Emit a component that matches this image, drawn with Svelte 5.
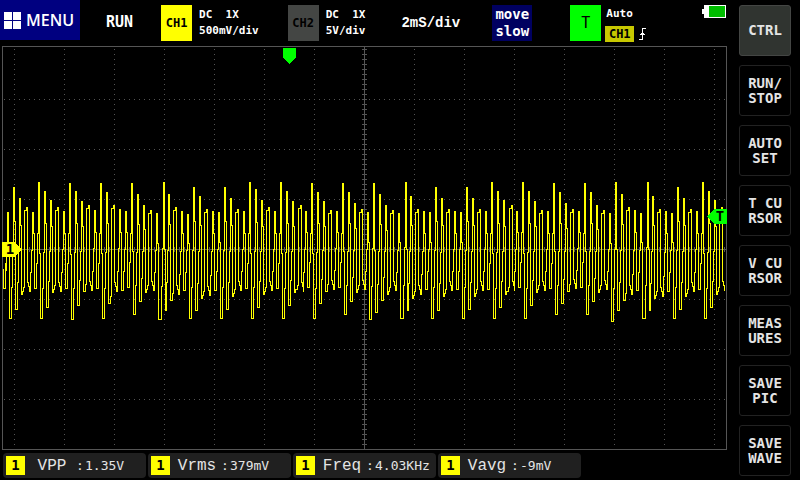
<script lang="ts">
  type Pulse = [x: number, top: number, bottom: number];

  const WIDTH = 725;
  const HEIGHT = 404;

  const softKeys = [
    ['CTRL'],
    ['RUN/', 'STOP'],
    ['AUTO', 'SET'],
    ['T CU', 'RSOR'],
    ['V CU', 'RSOR'],
    ['MEAS', 'URES'],
    ['SAVE', 'PIC'],
    ['SAVE', 'WAVE'],
  ];

  const measures = [
    { label: 'VPP', value: '1.35V' },
    { label: 'Vrms', value: '379mV' },
    { label: 'Freq', value: '4.03KHz' },
    { label: 'Vavg', value: '-9mV' },
  ];

  // Peak position, peak level and the level of the trough that follows
  const pulses: Pulse[] = [
    [5, 166, 272], [11, 141, 263], [17, 152, 248], [24, 161, 245], [30, 166, 242],
    [36, 136, 272], [42, 145, 261], [48, 154, 246], [55, 161, 245], [61, 165, 242],
    [67, 137, 273], [73, 145, 259], [79, 155, 245], [86, 159, 244], [92, 164, 242],
    [98, 137, 272], [104, 146, 257], [111, 159, 245], [117, 163, 244], [123, 165, 241],
    [129, 137, 268], [135, 148, 255], [141, 159, 246], [148, 164, 244], [154, 167, 273],
    [161, 136, 264], [166, 148, 254], [173, 161, 248], [179, 165, 244], [185, 168, 272],
    [191, 141, 264], [197, 150, 252], [204, 163, 249], [210, 165, 244], [216, 166, 272],
    [222, 141, 263], [228, 152, 250], [235, 163, 244], [241, 165, 242],
    [247, 136, 272], [253, 143, 261], [259, 154, 248], [266, 161, 244], [272, 165, 242],
    [278, 136, 272], [284, 145, 259], [290, 155, 246], [298, 159, 245], [303, 165, 241],
    [309, 137, 272], [315, 146, 257], [321, 155, 245], [328, 164, 243], [334, 165, 241],
    [340, 137, 268], [346, 146, 255], [352, 157, 246], [359, 163, 243], [365, 166, 273],
    [371, 137, 266], [377, 148, 254], [383, 159, 248], [390, 164, 244], [396, 167, 272],
    [403, 136, 264], [408, 150, 252], [415, 163, 248], [421, 165, 243], [427, 166, 272],
    [433, 141, 264], [439, 152, 250], [446, 163, 244], [452, 165, 243], [458, 166, 272],
    [464, 141, 263], [470, 152, 250], [477, 163, 244], [483, 165, 243],
    [489, 136, 272], [495, 145, 261], [501, 154, 248], [509, 159, 244], [514, 165, 241],
    [520, 136, 272], [526, 145, 259], [532, 155, 246], [539, 164, 244], [545, 165, 242],
    [551, 137, 268], [557, 146, 257], [563, 157, 245], [570, 163, 242], [576, 165, 241],
    [582, 137, 268], [588, 146, 255], [594, 159, 246], [601, 164, 243], [607, 167, 275],
    [613, 136, 264], [619, 148, 254], [626, 161, 248], [632, 164, 244], [638, 167, 272],
    [645, 136, 264], [650, 150, 252], [657, 163, 250], [663, 165, 245], [669, 167, 272],
    [675, 141, 263], [681, 152, 250], [688, 163, 245], [694, 165, 243],
    [700, 136, 272], [706, 145, 261], [712, 154, 248], [719, 161, 244],
  ];

  function between(a: number, b: number, share: number) {
    return Math.round(a + (b - a) * share);
  }

  // One screen column per sample: run to the column, then jump to the level
  function buildTrace(list: Pulse[]) {
    let path = 'M1.5 222.5V242.5H3.5V216.5';
    let before = 242;
    let last = 2;
    const step = (x: number, y: number) => {
      if (x < last || x > WIDTH - 2) return;
      last = x;
      path += `H${x + 0.5}V${y + 0.5}`;
    };
    list.forEach(([x, top, bottom], i) => {
      const broad = x - (list[i - 1]?.[0] ?? x - 6) > 6 && top > 155;
      if (broad) {
        step(x - 3, before - 7);
        step(x - 2, top + 3);
        step(x, top);
        step(x + 1, bottom - 9);
        step(x + 2, bottom - 5);
        step(x + 3, bottom);
      } else {
        step(x - 2, between(before, top, 0.24));
        step(x - 1, between(before, top, 0.52));
        step(x, top);
        if (top < 140) {
          // clipped crest, two columns wide
          step(x + 1, between(top, bottom, 0.52));
          path += `V${top + 2.5}V${between(top, bottom, 0.52) + 0.5}`;
          step(x + 2, bottom);
        } else {
          step(x + 1, between(top, bottom, 0.28));
          step(x + 2, bottom);
          if (bottom > 245 && bottom < 253) step(x + 3, bottom - 3);
        }
      }
      before = bottom;
    });
    return path;
  }

  const trace = buildTrace(pulses);
  const columns = Array.from({ length: 15 }, (_, i) => 12 + i * 50).filter(x => x !== 362);
  const rows = [53, 103, 153, 253, 303, 353];

  let active = $state(0);
</script>

<div class="scope">
  <main>
    <header>
      <button class="menu" type="button">
        <svg width="17" height="17" viewBox="0 0 17 17" aria-hidden="true">
          <path d="M0 0h8v8H0zM9 0h8v8H9zM0 9h8v8H0zM9 9h8v8H9z" fill="#fff" />
        </svg>
        MENU
      </button>
      <span class="state">RUN</span>
      <div class="channel">
        <button class="tag" type="button">CH1</button>
        <p>DC&nbsp; 1X<br />500mV/div</p>
      </div>
      <div class="channel second">
        <button class="tag off" type="button">CH2</button>
        <p>DC&nbsp; 1X<br />5V/div</p>
      </div>
      <span class="timebase">2mS/div</span>
      <button class="move" type="button"><span>move</span><span>slow</span></button>
      <div class="trigger">
        <button class="tag trig" type="button">T</button>
        <div class="trigger-info">
          <span class="mode">Auto</span>
          <div class="source">
            <span class="source-name">CH1</span>
            <svg width="8" height="14" viewBox="0 0 8 14" aria-hidden="true" shape-rendering="crispEdges">
              <path d="M0 12.5H3.5V1.5H7M1 7.5H6M2 6.5H5" fill="none" stroke="#fff" />
            </svg>
          </div>
        </div>
      </div>
      <svg class="battery" width="24" height="13" viewBox="0 0 24 13" role="img" aria-label="Battery">
        <path d="M2 0H24V13H2V9H0V4H2Z" fill="#fff" />
        <path d="M7 1H23V12H7Z" fill="#00be00" />
      </svg>
    </header>

    <svg class="plot" viewBox="0 0 {WIDTH} {HEIGHT}" role="img" aria-label="Waveform" shape-rendering="crispEdges">
      <g class="dots">
        {#each columns as x}
          <path d="M{x + 0.5} 3V402" />
        {/each}
        {#each rows as y}
          <path d="M2 {y + 0.5}H723" />
        {/each}
      </g>
      <path class="frame" d="M0.5 0.5H724.5V403.5H0.5Z" />
      <g class="axis">
        <path d="M362.5 1V403M1 203.5H724" />
        <path class="ticks" d="M362.5 3V402" />
        <path class="ticks" d="M2 203.5H723" />
      </g>
      <path class="trace" d={trace} />
      <path d="M281 2H294V12L287.5 18L281 12Z" fill="#0f0" />
      <path d="M0 196H13L20 203.5L13 211H0Z" fill="#ff0" />
      <path d="M725 163H713L705 170.5L713 178H725Z" fill="#0f0" />
      <text x="8" y="208" text-anchor="middle">1</text>
      <text x="718" y="175" text-anchor="middle">T</text>
    </svg>

    <footer>
      {#each measures as m}
        <div class="measure">
          <span class="badge">1</span>
          <span class="label">{m.label}</span>
          <span class="colon">:</span>
          <span class="value">{m.value}</span>
        </div>
      {/each}
    </footer>
  </main>

  <nav>
    {#each softKeys as key, i}
      <button type="button" class:active={i === active} onclick={() => (active = i)}>
        {#each key as line}
          <span>{line}</span>
        {/each}
      </button>
    {/each}
  </nav>
</div>

<style>
  :global(body) {
    background: #000;
  }

  .scope {
    display: flex;
    gap: 12px;
    min-height: 100vh;
    box-sizing: border-box;
    padding: 0 9px 0 2px;
    color: #fff;
    font-family: 'DejaVu Sans Mono', monospace;
  }

  main {
    flex: 1;
    min-width: 0;
  }

  button {
    padding: 0;
    border: none;
    font-family: inherit;
    cursor: pointer;
  }

  p {
    margin: 0;
  }

  header {
    display: flex;
    align-items: flex-start;
    height: 46px;
  }

  .menu {
    display: flex;
    align-items: center;
    gap: 5px;
    box-sizing: border-box;
    width: 80px;
    height: 40px;
    margin-left: -2px;
    padding-left: 4px;
    background: #000080;
    color: #fff;
    font-family: 'Open Sans', sans-serif;
    font-size: 16px;
    font-weight: 600;
  }

  .state {
    margin: 12px 0 0 26px;
    font-size: 15px;
    font-weight: bold;
    line-height: 20px;
  }

  .channel,
  .trigger {
    display: flex;
    gap: 7px;
    margin: 5px 0 0 28px;
    font-size: 11px;
    font-weight: bold;
    line-height: 16px;
  }

  .channel p {
    padding-top: 2px;
  }

  .second {
    margin-left: 29px;
  }

  .tag {
    width: 31px;
    height: 36px;
    background: #ff0;
    color: #000;
    font-size: 12px;
    font-weight: bold;
  }

  .off {
    background: #444644;
  }

  .trig {
    background: #0f0;
    font-size: 15px;
    font-weight: normal;
  }

  .timebase {
    margin: 13px 0 0 36px;
    font-family: 'Liberation Mono', monospace;
    font-size: 14px;
    font-weight: bold;
    line-height: 20px;
  }

  .move {
    display: flex;
    flex-direction: column;
    align-items: center;
    justify-content: center;
    width: 40px;
    height: 36px;
    margin: 5px 0 0 32px;
    background: #000060;
    color: #fff;
    font-size: 14px;
    font-weight: bold;
    line-height: 17px;
  }

  .trigger {
    gap: 4px;
    margin-left: 38px;
  }

  .trigger-info {
    display: flex;
    flex-direction: column;
    gap: 4px;
    padding-top: 1px;
  }

  .mode {
    padding-left: 1px;
  }

  .source {
    display: flex;
    align-items: center;
    gap: 5px;
  }

  .source-name {
    width: 29px;
    background: #c8c800;
    color: #000;
    font-size: 12px;
    text-align: center;
  }

  .battery {
    margin: 5px 1px 0 auto;
  }

  .plot {
    display: block;
    width: 100%;
  }

  .plot path {
    stroke-width: 1;
  }

  .frame {
    fill: none;
    stroke: #555;
  }

  .dots {
    fill: none;
    stroke: #555;
    stroke-dasharray: 1 4;
  }

  .trace {
    fill: none;
    stroke: #ff0;
  }

  .axis {
    fill: none;
    stroke: #555;
  }

  .plot .ticks {
    stroke-width: 5;
    stroke-dasharray: 1 4;
  }

  .plot text {
    font-size: 14px;
    font-weight: bold;
  }

  footer {
    display: flex;
    gap: 2px;
    margin: 3px 0 0 1px;
  }

  .measure {
    display: flex;
    align-items: center;
    width: 143px;
    height: 25px;
    box-sizing: border-box;
    padding-left: 3px;
    border-radius: 4px;
    background: #202020;
    color: #e4e4e4;
  }

  .badge {
    width: 19px;
    background: #ff0;
    color: #000;
    font-size: 14px;
    font-weight: bold;
    line-height: 19px;
    text-align: center;
  }

  .label {
    width: 48px;
    margin-left: 3px;
    font-family: 'Liberation Mono', monospace;
    font-size: 16px;
    text-align: center;
  }

  .colon {
    width: 9px;
    font-size: 13px;
  }

  .value {
    font-size: 13px;
  }

  nav {
    display: flex;
    flex-direction: column;
    gap: 9px;
    width: 52px;
    padding-top: 5px;
  }

  nav button {
    display: flex;
    flex-direction: column;
    align-items: center;
    justify-content: center;
    box-sizing: border-box;
    height: 51px;
    border: 1px solid #222;
    border-radius: 3px;
    background: #000;
    color: #e4e4e4;
    font-size: 14px;
    font-weight: bold;
    line-height: 15px;
  }

  nav .active {
    border-color: #444644;
    background: #303430;
  }
</style>
